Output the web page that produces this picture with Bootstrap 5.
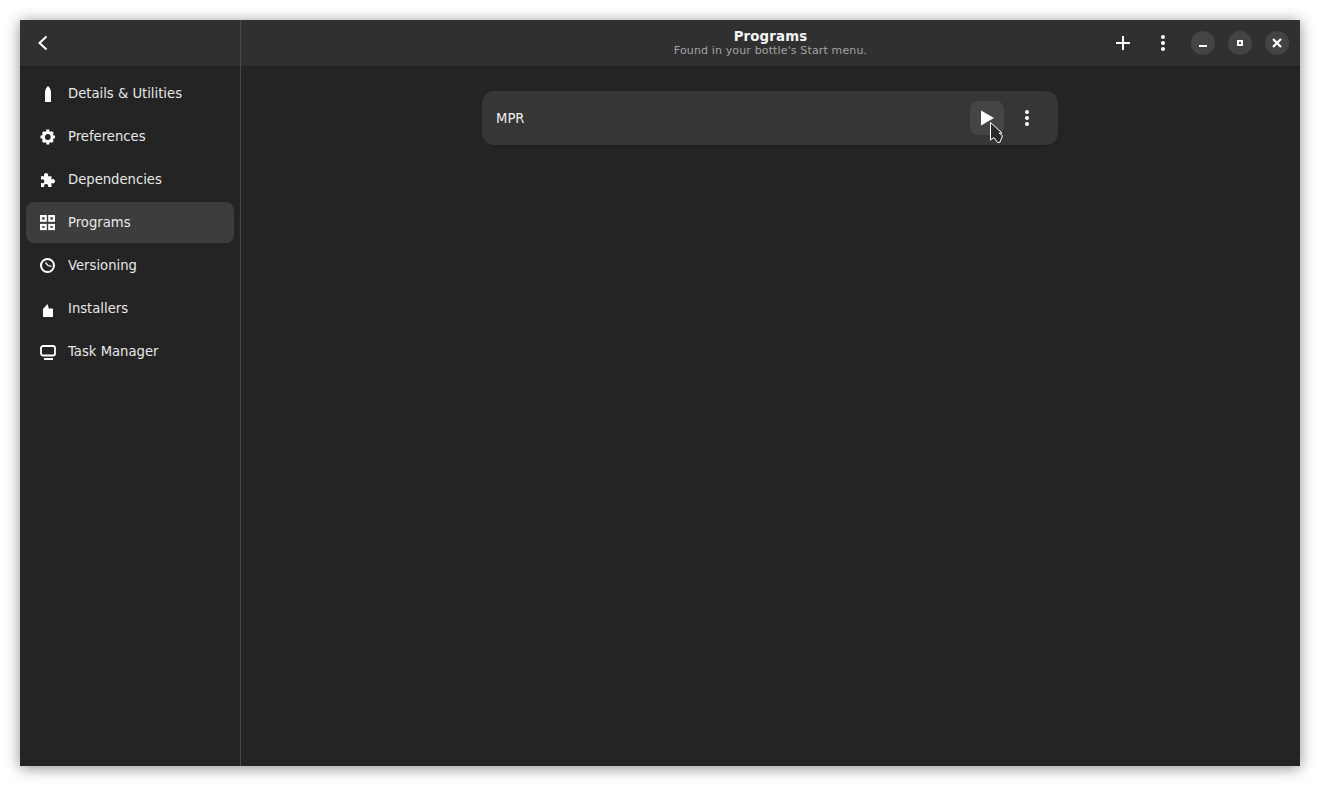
<!DOCTYPE html>
<html lang="en">
<head>
<meta charset="utf-8">
<title>Programs</title>
<link href="https://cdn.jsdelivr.net/npm/bootstrap@5.3.0/dist/css/bootstrap.min.css" rel="stylesheet">
<style>
html,body{height:100%;}
body{background:#fff;padding:20px;font-family:"DejaVu Sans",sans-serif;font-size:13.2px;color:#fff;overflow:hidden;}
.app-win{width:1280px;height:746px;background:#242424;box-shadow:0 2px 14px rgba(0,0,0,.45);}
.side-pane{width:221px;border-right:1px solid #4a4a4a;}
.head-left{height:47px;background:#303030;border-bottom:1px solid #1f1f1f;padding-left:15px;}
.head-main{height:47px;background:#303030;border-bottom:1px solid #1f1f1f;padding-right:11px;}
.head-title{font-weight:700;font-size:13.33px;line-height:16px;color:#f6f6f6;letter-spacing:.15px;}
.head-sub{font-size:11px;line-height:12px;color:#a3a3a3;letter-spacing:.14px;}
.title-box{left:0;right:0;top:9px;}
.side-list{padding:6px;gap:2px;}
.side-item{height:41px;border-radius:8px;padding-left:14px;gap:12px;color:#e8e8e8;}
.side-item.on{background:#3d3d3d;}
.icon-16{width:16px;height:16px;flex:none;display:block;}
.win-btn{width:24px;height:24px;border-radius:50%;background:#444;}
.win-row{gap:13px;}
.tool-plus{margin-right:24px;}
.tool-more{margin-right:20px;}
.list-wrap{padding-right:1px;}
.row-card{width:576px;height:54px;background:#363636;border-radius:12px;margin-top:24px;padding:0 14px;box-shadow:0 1px 2px rgba(0,0,0,.2);color:#eee;}
.row-name{padding-top:2px;}
.play-box{width:34px;height:34px;border-radius:8px;background:#454545;}
.more-box{width:34px;height:34px;margin-left:6px;}
.ptr{position:absolute;left:989px;top:121px;width:15px;height:23px;}
</style>
</head>
<body>
<div class="app-win d-flex">
  <aside class="side-pane d-flex flex-column">
    <div class="head-left d-flex align-items-center">
      <svg class="icon-16" viewBox="0 0 16 16"><path d="M11.500 1.500 4.500 8l7 6.500" fill="none" stroke="#fff" stroke-width="2"/></svg>
    </div>
    <div class="side-list d-flex flex-column">
      <div class="side-item d-flex align-items-center">
        <svg class="icon-16" viewBox="0 0 16 16"><path d="M8 0c1 1 3 3 3 6.500V16H5V6.500C5 3 7 1 8 0z" fill="#fff"/></svg>
        <span>Details &amp; Utilities</span>
      </div>
      <div class="side-item d-flex align-items-center">
        <svg class="icon-16" viewBox="0 0 16 16"><circle cx="7.800" cy="8" r="4.400" fill="none" stroke="#fff" stroke-width="3"/><g fill="#fff"><rect x="6.300" y="0.500" width="3" height="3"/><rect x="6.300" y="12.500" width="3" height="3"/><rect x="0.500" y="6.500" width="3" height="3"/><rect x="12" y="6.500" width="3" height="3"/><rect x="6.300" y="1" width="3" height="3" transform="rotate(45 7.800 8)"/><rect x="6.300" y="1" width="3" height="3" transform="rotate(135 7.800 8)"/><rect x="6.300" y="1" width="3" height="3" transform="rotate(225 7.800 8)"/><rect x="6.300" y="1" width="3" height="3" transform="rotate(315 7.800 8)"/></g></svg>
        <span>Preferences</span>
      </div>
      <div class="side-item d-flex align-items-center">
        <svg class="icon-16" viewBox="0 0 16 16"><path fill="#fff" d="M6 1c1.400 0 2.300 1 2.200 2.200 0 .4-.2.700-.3 1h3.600v3.300c.5-.4 1-.6 1.500-.5 1.100.1 2 1 2 2.200S14 11.400 13 11.400c-.6 0-1.100-.2-1.500-.6V15H7.700c.3-.4.5-.8.500-1.300 0-1-.9-1.800-2.100-1.800S4 12.700 4 13.700c0 .5.200.9.500 1.300H1v-4.200c.4.300.9.500 1.400.5 1.100 0 2-.9 2-2.100s-.9-2-2-2c-.5 0-1 .2-1.400.5V4.200h3.300c-.2-.3-.3-.6-.3-1C4 2 4.800 1 6 1z"/></svg>
        <span>Dependencies</span>
      </div>
      <div class="side-item on d-flex align-items-center">
        <svg class="icon-16" viewBox="0 0 16 16"><g fill="none" stroke="#fff" stroke-width="2.200"><rect x="1.100" y="1.100" width="4.600" height="4.600"/><rect x="9.300" y="1.100" width="4.600" height="4.600"/><rect x="1.100" y="10" width="4.600" height="4"/><rect x="9.300" y="10" width="4.600" height="4"/></g></svg>
        <span>Programs</span>
      </div>
      <div class="side-item d-flex align-items-center">
        <svg class="icon-16" viewBox="0 0 16 16"><circle cx="7.500" cy="7.500" r="6.500" fill="none" stroke="#fff" stroke-width="2"/><path d="M5.500 4.500 8 7.500l3.500.8" fill="none" stroke="#fff" stroke-width="1.200"/></svg>
        <span>Versioning</span>
      </div>
      <div class="side-item d-flex align-items-center">
        <svg class="icon-16" viewBox="0 0 16 16"><path fill="#fff" d="M3 8 7.500 3 9 8l1-.8 3 .6V16H3z"/></svg>
        <span>Installers</span>
      </div>
      <div class="side-item d-flex align-items-center">
        <svg class="icon-16" viewBox="0 0 16 16"><rect x="1" y="2" width="14" height="9.500" rx="2" fill="none" stroke="#fff" stroke-width="1.800"/><rect x="4" y="14" width="9" height="2" fill="#fff"/></svg>
        <span>Task Manager</span>
      </div>
    </div>
  </aside>
  <main class="flex-grow-1 d-flex flex-column">
    <header class="head-main position-relative d-flex align-items-center justify-content-end">
      <div class="title-box position-absolute text-center">
        <div class="head-title">Programs</div>
        <div class="head-sub">Found in your bottle's Start menu.</div>
      </div>
      <svg class="icon-16 position-relative tool-plus" viewBox="0 0 16 16"><path d="M8 1v14M1 8h14" stroke="#fff" stroke-width="2" fill="none"/></svg>
      <svg class="icon-16 position-relative tool-more" viewBox="0 0 16 16"><circle cx="8" cy="2" r="2" fill="#fff"/><circle cx="8" cy="8" r="2" fill="#fff"/><circle cx="8" cy="14" r="2" fill="#fff"/></svg>
      <div class="d-flex win-row position-relative">
        <div class="win-btn d-flex align-items-center justify-content-center"><svg width="10" height="10" viewBox="0 0 10 10"><rect x="1" y="7" width="8" height="2" fill="#fff"/></svg></div>
        <div class="win-btn d-flex align-items-center justify-content-center"><svg width="8" height="8" viewBox="0 0 8 8"><rect x="2" y="2" width="4" height="4" fill="none" stroke="#fff" stroke-width="2"/></svg></div>
        <div class="win-btn d-flex align-items-center justify-content-center"><svg width="10" height="10" viewBox="0 0 10 10"><path d="M1 1l8 8M9 1l-8 8" stroke="#fff" stroke-width="2.200" fill="none"/></svg></div>
      </div>
    </header>
    <section class="list-wrap d-flex justify-content-center">
      <div class="row-card d-flex align-items-center justify-content-between">
        <span class="row-name">MPR</span>
        <div class="d-flex align-items-center">
          <div class="play-box d-flex align-items-center justify-content-center"><svg class="icon-16" viewBox="0 0 16 16"><path d="M2 .5 15 8 2 15.500z" fill="#fff"/></svg></div>
          <div class="more-box d-flex align-items-center justify-content-center"><svg class="icon-16" viewBox="0 0 16 16"><circle cx="8" cy="2" r="2" fill="#fff"/><circle cx="8" cy="8" r="2" fill="#fff"/><circle cx="8" cy="14" r="2" fill="#fff"/></svg></div>
        </div>
      </div>
    </section>
  </main>
</div>
<svg class="ptr" viewBox="0 0 15 23"><path d="M1.500 1.500V19l3.500-2.500 3.500 5 2.500-.3 2.500-6.500-3.500-2.500L13 12z" fill="#2a2a2a" stroke="#fff" stroke-width="1"/></svg>
<script src="https://cdn.jsdelivr.net/npm/bootstrap@5.3.0/dist/js/bootstrap.bundle.min.js"></script>
</body>
</html>
